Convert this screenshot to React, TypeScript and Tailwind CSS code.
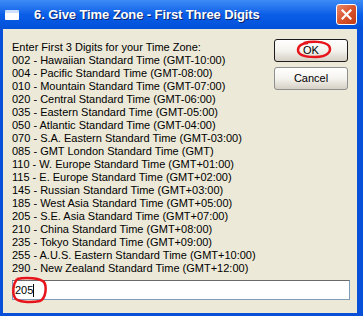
import React from 'react';

const zones = [
  '002 - Hawaiian Standard Time (GMT-10:00)',
  '004 - Pacific Standard Time (GMT-08:00)',
  '010 - Mountain Standard Time (GMT-07:00)',
  '020 - Central Standard Time (GMT-06:00)',
  '035 - Eastern Standard Time (GMT-05:00)',
  '050 - Atlantic Standard Time (GMT-04:00)',
  '070 - S.A. Eastern Standard Time (GMT-03:00)',
  '085 - GMT London Standard Time (GMT)',
  '110 - W. Europe Standard Time (GMT+01:00)',
  '115 - E. Europe Standard Time (GMT+02:00)',
  '145 - Russian Standard Time (GMT+03:00)',
  '185 - West Asia Standard Time (GMT+05:00)',
  '205 - S.E. Asia Standard Time (GMT+07:00)',
  '210 - China Standard Time (GMT+08:00)',
  '235 - Tokyo Standard Time (GMT+09:00)',
  '255 - A.U.S. Eastern Standard Time (GMT+10:00)',
  '290 - New Zealand Standard Time (GMT+12:00)',
];

function XpButton({ label, focused }: { label: string; focused?: boolean }) {
  return (
    <button
      className={`w-[74px] h-[23px] rounded-[3px] text-[11px] text-black bg-gradient-to-b from-[#ffffff] via-[#f4f3ee] to-[#d6d0c5] ${
        focused ? 'border border-[#1c1c1c]' : 'border border-[#8e8f8f]'
      }`}
    >
      {label}
    </button>
  );
}

export default function App() {
  return (
    <div className="w-[363px] h-[316px] bg-[#0a4fd8] flex flex-col overflow-hidden font-['Liberation_Sans',Arial,sans-serif]">
      {/* Title bar */}
      <div className="h-[29px] shrink-0 flex items-center bg-gradient-to-b from-[#3d8bf5] via-[#0a5ee8] to-[#0250d8] pl-[5px] pr-[6px]">
        <div className="w-[14px] h-[10px] bg-white border-t-[3px] border-[#cfe0ff] rounded-[1px]" />
        <span className="ml-[15px] text-white font-bold text-[13px] tracking-[-0.1px] [text-shadow:1px_1px_0_#0a246a]">
          6. Give Time Zone - First Three Digits
        </span>
        <div className="ml-auto w-[21px] h-[21px] rounded-[3px] border border-white bg-gradient-to-br from-[#e9886a] via-[#d9542c] to-[#c13a12] flex items-center justify-center">
          <svg width="11" height="11" viewBox="0 0 11 11">
            <path d="M1.5 1.5 L9.5 9.5 M9.5 1.5 L1.5 9.5" stroke="white" strokeWidth="2.2" strokeLinecap="square" />
          </svg>
        </div>
      </div>

      {/* Body */}
      <div className="flex-1 ml-[3px] mr-[6px] mb-[3px] bg-[#ece9d8] relative flex flex-col px-[9px] pt-[10px]">
        <div className="flex">
          <div className="flex-1 pt-[2px] text-[11px] leading-[13px] text-black">
            <div>Enter First 3 Digits for your Time Zone:</div>
            {zones.map((z) => (
              <div key={z}>{z}</div>
            ))}
          </div>
          <div className="flex flex-col gap-[5px]">
            <XpButton label="OK" focused />
            <XpButton label="Cancel" />
          </div>
        </div>

        <div className="mt-[5px] h-[20px] w-[338px] bg-white border border-[#7f9db9] border-t-[#6b6b6b] flex items-center pl-[2px] text-[11px] text-black">
          205<span className="inline-block w-px h-[13px] bg-black" />
        </div>

        {/* red annotation marks */}
        <svg className="absolute left-[292px] top-[11px]" width="38" height="20" viewBox="0 0 38 20">
          <path d="M9 3 C 16 1, 30 1, 34 6 C 37 11, 33 17, 20 17 C 9 17, 3 15, 3 10 C 3 6, 7 3, 13 3" fill="none" stroke="#e8141c" strokeWidth="2.5" />
        </svg>
        <svg className="absolute left-[7px] top-[247px]" width="40" height="28" viewBox="0 0 40 28">
          <path d="M7 3 C 16 1, 30 2, 34 6 C 37 11, 36 22, 30 25 C 20 27, 8 26, 5 22 C 2 17, 3 8, 7 3" fill="none" stroke="#e8141c" strokeWidth="2.5" />
        </svg>
      </div>
    </div>
  );
}
